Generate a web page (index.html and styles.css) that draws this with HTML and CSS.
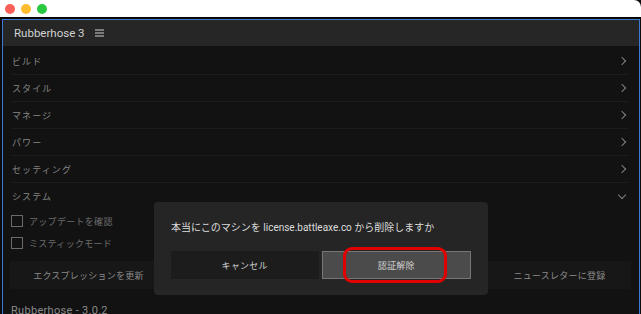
FILE: index.html
```html
<!doctype html>
<html>
  <head>
    <meta charset="UTF-8" />
    <title>Rubberhose 3</title>
    <link rel="stylesheet" href="styles.css">
  </head>
  <body>
    <div class="titlebar">
      <span class="light red"></span>
      <span class="light yellow"></span>
      <span class="light green"></span>
    </div>
    <div class="window">
      <div class="panel">
        <div class="header">
          <span class="title">Rubberhose 3</span>
          <svg class="menu" width="9" height="8" viewBox="0 0 9 8">
            <path d="M0 1h9M0 4h9M0 7h9" stroke="#cfcfcf" stroke-width="1" />
          </svg>
        </div>

        <ul class="sections">
          <li class="row"><span>ビルド</span><i class="chev"></i></li>
          <li class="row"><span>スタイル</span><i class="chev"></i></li>
          <li class="row"><span>マネージ</span><i class="chev"></i></li>
          <li class="row"><span>パワー</span><i class="chev"></i></li>
          <li class="row"><span>セッティング</span><i class="chev"></i></li>
          <li class="row open"><span>システム</span><i class="chev down"></i></li>
        </ul>

        <div class="options">
          <label class="check"><i class="box"></i>アップデートを確認</label>
          <label class="check"><i class="box"></i>ミスティックモード</label>
        </div>

        <div class="actions">
          <div class="btn left">エクスプレッションを更新</div>
          <div class="btn middle">ライセンスを解除</div>
          <div class="btn right">ニュースレターに登録</div>
        </div>

        <div class="footer">Rubberhose - 3.0.2</div>
      </div>

      <!-- 確認ダイアログ -->
      <div class="dialog">
        <p class="message">本当にこのマシンを license.battleaxe.co から削除しますか</p>
        <div class="dialog-buttons">
          <div class="dbtn cancel">キャンセル</div>
          <div class="dbtn confirm">認証解除</div>
        </div>
        <div class="highlight"></div>
      </div>
    </div>
  </body>
</html>
```

FILE: styles.css
```css
* {
  padding: 0px;
  margin: 0px;
  box-sizing: border-box;
}
html,
body {
  width: 641px;
  height: 314px;
  overflow: hidden;
  background-color: #0c0c0c;
  font-family: Roboto, "Noto Sans CJK JP", sans-serif;
}
.titlebar {
  height: 17px;
  background-color: #ffffff;
  border-top-right-radius: 7px;
  display: flex;
  align-items: center;
  gap: 6px;
  padding-left: 5px;
}
.light {
  width: 10px;
  height: 10px;
  border-radius: 50%;
  display: block;
}
.red {
  background-color: #fe5f57;
}
.yellow {
  background-color: #febc2e;
}
.green {
  background-color: #28c840;
}
.window {
  position: relative;
  height: 297px;
  border-top: 1px solid #000;
  padding: 1px 1px 0 2px;
  background-color: #0c0c0c;
}
.panel {
  height: 100%;
  border: 1px solid #3b7bd6;
  border-bottom: none;
  background-color: #121212;
  overflow: hidden;
}
.header {
  height: 26px;
  background-color: #262626;
  display: flex;
  align-items: center;
  gap: 10px;
  padding-left: 11px;
}
.title {
  color: #d2d2d2;
  font-size: 11.5px;
}
.menu {
  display: block;
}
.sections {
  list-style: none;
  padding: 2px 10px 0 8px;
}
.row {
  height: 27px;
  display: flex;
  align-items: center;
  justify-content: space-between;
  border-bottom: 1px solid #1c1c1c;
  color: #858585;
  font-size: 9px;
  letter-spacing: 1.1px;
  padding-left: 1px;
}
.row.open {
  border-bottom: none;
}
.chev {
  width: 6px;
  height: 6px;
  border-top: 1px solid #808080;
  border-right: 1px solid #808080;
  transform: rotate(45deg);
  margin-right: 4px;
}
.chev.down {
  transform: rotate(135deg);
  margin-top: -4px;
}
.options {
  padding: 0 0 0 8px;
}
.check {
  height: 22px;
  display: flex;
  align-items: center;
  gap: 6px;
  color: #6e6e6e;
  font-size: 9px;
  letter-spacing: 0.3px;
}
.box {
  width: 12px;
  height: 12px;
  border: 1px solid #6a6a6a;
}
.actions {
  display: flex;
  gap: 10px;
  padding: 7px 8px 0 7px;
}
.btn {
  height: 28px;
  background-color: #171717;
  color: #8a8a8a;
  font-size: 9px;
  letter-spacing: 0.25px;
  display: flex;
  align-items: center;
  justify-content: center;
}
.left {
  width: 157px;
}
.middle {
  flex: 1;
}
.right {
  width: 143px;
}
.footer {
  padding: 15px 0 0 8px;
  color: #8a8a8a;
  font-size: 11px;
  letter-spacing: 0.3px;
}
.dialog {
  position: absolute;
  left: 154px;
  top: 184px;
  width: 334px;
  height: 93px;
  background-color: #252525;
  border-radius: 4px;
  padding: 16px 17px 0 17px;
}
.message {
  color: #dcdcdc;
  font-size: 10px;
  height: 33px;
  line-height: 20px;
}
.dialog-buttons {
  display: flex;
  gap: 3px;
}
.dbtn {
  flex: 1;
  height: 28px;
  display: flex;
  align-items: center;
  justify-content: center;
  font-size: 9px;
  letter-spacing: 0.25px;
  color: #cfcfcf;
}
.cancel {
  background-color: #1c1c1c;
}
.confirm {
  background-color: #4b4b4b;
  border: 1px solid #767676;
}
.highlight {
  position: absolute;
  left: 189px;
  top: 45px;
  width: 104px;
  height: 36px;
  border: 3px solid #e00000;
  border-radius: 9px;
}
```
